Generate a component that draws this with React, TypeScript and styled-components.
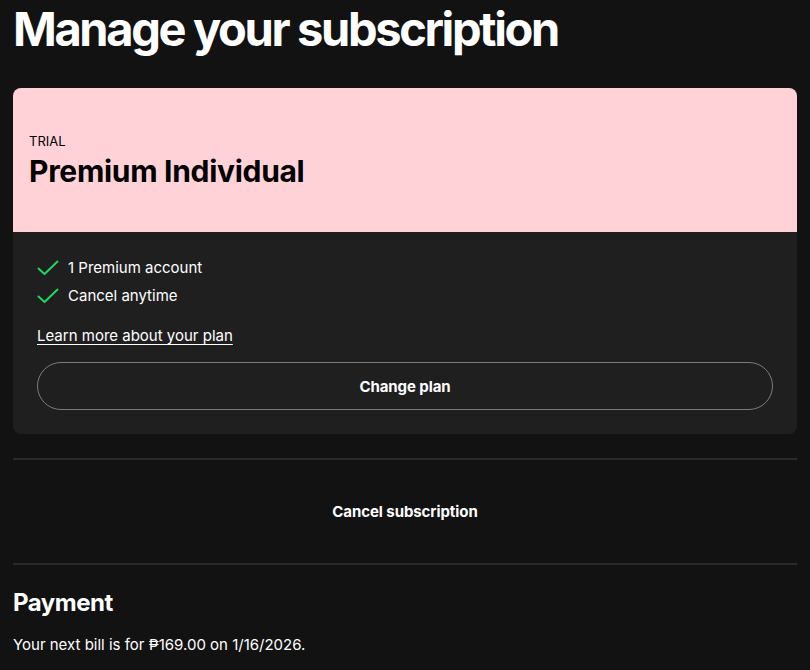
import React from "react";
import styled, { createGlobalStyle } from "styled-components";

const Global = createGlobalStyle`
  html, body { margin: 0; padding: 0; background: #121212; }
  body { font-family: Inter, "Noto Sans", sans-serif; color: #fff; }
  * { box-sizing: border-box; }
`;

const Page = styled.div`
  padding: 0 13px;
  display: flex;
  flex-direction: column;
`;

const Title = styled.h1`
  margin: 0;
  padding-top: 2px;
  font-size: 47px;
  font-weight: 700;
  letter-spacing: -0.05em;
  line-height: 54px;
  height: 88px;
`;

const Card = styled.div`
  border-radius: 8px;
  overflow: hidden;
  background: #1f1f1f;
`;

const CardHeader = styled.div`
  background: #ffd2d7;
  color: #000;
  height: 144px;
  padding: 45px 16px 0;
  display: flex;
  flex-direction: column;
`;

const Tag = styled.span`
  font-size: 13px;
  line-height: 16px;
  font-weight: 400;
`;

const PlanName = styled.h2`
  margin: 4px 0 0;
  font-size: 30px;
  font-weight: 700;
  letter-spacing: -0.01em;
  line-height: 36px;
`;

const CardBody = styled.div`
  padding: 26px 24px 24px;
  display: flex;
  flex-direction: column;
`;

const FeatureList = styled.ul`
  list-style: none;
  margin: 0;
  padding: 0;
  display: flex;
  flex-direction: column;
  gap: 8px;
`;

const Feature = styled.li`
  display: flex;
  align-items: center;
  gap: 9px;
  font-size: 15px;
  line-height: 20px;
`;

const LearnLink = styled.a`
  margin-top: 20px;
  color: #fff;
  font-size: 15px;
  line-height: 20px;
  text-decoration: underline;
  text-underline-offset: 3px;
  align-self: flex-start;
`;

const OutlineButton = styled.button`
  margin-top: 16px;
  height: 48px;
  border-radius: 24px;
  border: 1px solid #7c7c7c;
  background: transparent;
  color: #fff;
  font-family: inherit;
  font-size: 15px;
  font-weight: 700;
  letter-spacing: -0.005em;
`;

const Divider = styled.hr<{ $gap?: number }>`
  margin: ${(p) => p.$gap ?? 0}px 0 0;
  border: none;
  height: 2px;
  background: #2a2a2a;
`;

const CancelRow = styled.div`
  height: 103px;
  display: flex;
  align-items: center;
  justify-content: center;
  font-size: 15px;
  font-weight: 700;
  letter-spacing: -0.005em;
`;

const SectionTitle = styled.h3`
  margin: 24px 0 0;
  font-size: 24px;
  font-weight: 700;
  letter-spacing: -0.02em;
  line-height: 28px;
`;

const BodyText = styled.p`
  margin: 18px 0 0;
  font-size: 15px;
  line-height: 20px;
`;

const Check = () => (
  <svg width="22" height="16" viewBox="0 0 22 16" fill="none">
    <path d="M1.5 8.5 L7.5 14 L20.5 1.5" stroke="#1ed760" strokeWidth="2" strokeLinecap="round" strokeLinejoin="round" />
  </svg>
);

export default function App() {
  return (
    <>
      <Global />
      <Page>
        <Title>Manage your subscription</Title>
        <Card>
          <CardHeader>
            <Tag>TRIAL</Tag>
            <PlanName>Premium Individual</PlanName>
          </CardHeader>
          <CardBody>
            <FeatureList>
              <Feature><Check />1 Premium account</Feature>
              <Feature><Check />Cancel anytime</Feature>
            </FeatureList>
            <LearnLink href="#">Learn more about your plan</LearnLink>
            <OutlineButton>Change plan</OutlineButton>
          </CardBody>
        </Card>
        <Divider $gap={24} />
        <CancelRow>Cancel subscription</CancelRow>
        <Divider />
        <SectionTitle>Payment</SectionTitle>
        <BodyText>Your next bill is for ₱169.00 on 1/16/2026.</BodyText>
      </Page>
    </>
  );
}
